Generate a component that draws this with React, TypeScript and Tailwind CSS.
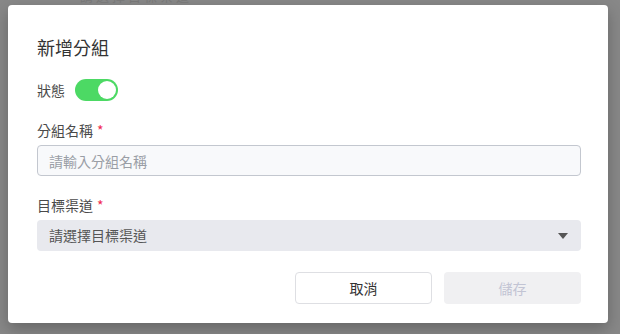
import { useState } from "react";

const font = { fontFamily: '"Noto Sans CJK TC", "Noto Sans", sans-serif' };

function Label({ text, required }: { text: string; required?: boolean }) {
  return (
    <div className="text-[14px] leading-[20px] text-[#4a4a4a]">
      {text}
      {required && <span className="ml-1 text-[#f0294f]">*</span>}
    </div>
  );
}

export default function App() {
  const [on, setOn] = useState(true);
  const [name, setName] = useState("");

  return (
    <div
      className="relative w-[620px] h-[334px] overflow-hidden bg-[#888888]"
      style={font}
    >
      {/* 背景殘影 */}
      <div className="absolute left-[80px] top-[-14px] text-[13px] text-[#7a7a7a] tracking-[3px]">
        請選擇目標渠道
      </div>

      <div className="absolute left-[8px] top-[5px] w-[600px] h-[318px] rounded-[4px] bg-white pl-[29px] pr-[27px] pt-[29px] shadow-[0_6px_16px_rgba(0,0,0,0.25)]">
        <h2 className="text-[18px] leading-[26px] text-[#333]">新增分組</h2>

        <div className="mt-[19px] flex items-center gap-[10px] h-[22px]">
          <span className="text-[14px] text-[#4a4a4a]">狀態</span>
          <button
            type="button"
            onClick={() => setOn(!on)}
            className={
              "relative w-[43px] h-[22px] rounded-full transition-colors " +
              (on ? "bg-[#4cd964]" : "bg-[#d0d3da]")
            }
          >
            <span
              className={
                "absolute top-[2px] w-[18px] h-[18px] rounded-full bg-white transition-all " +
                (on ? "left-[23px]" : "left-[2px]")
              }
            />
          </button>
        </div>

        <div className="mt-[19px]">
          <Label text="分組名稱" required />
          <input
            value={name}
            onChange={(e) => setName(e.target.value)}
            placeholder="請輸入分組名稱"
            className="mt-[5px] block w-full h-[31px] rounded-[4px] border border-[#c3c7cf] bg-[#f8f9fb] px-[11px] text-[14px] text-[#333] placeholder:text-[#9a9ea6] outline-none"
          />
        </div>

        <div className="mt-[19px]">
          <Label text="目標渠道" required />
          <div className="mt-[5px] flex items-center justify-between h-[31px] rounded-[4px] bg-[#e8e9ee] pl-[12px] pr-[13px] text-[14px] text-[#555]">
            <span>請選擇目標渠道</span>
            <svg width="10" height="6" viewBox="0 0 10 6">
              <path d="M0 0h10L5 6z" fill="#555" />
            </svg>
          </div>
        </div>

        <div className="mt-[21px] flex justify-end gap-[12px]">
          <button
            type="button"
            className="w-[137px] h-[32px] rounded-[4px] border border-[#dedfe3] bg-white text-[14px] text-[#333]"
          >
            取消
          </button>
          <button
            type="button"
            disabled
            className="w-[137px] h-[32px] rounded-[4px] bg-[#f0f0f2] text-[14px] text-[#c2c4d4]"
          >
            儲存
          </button>
        </div>
      </div>
    </div>
  );
}
